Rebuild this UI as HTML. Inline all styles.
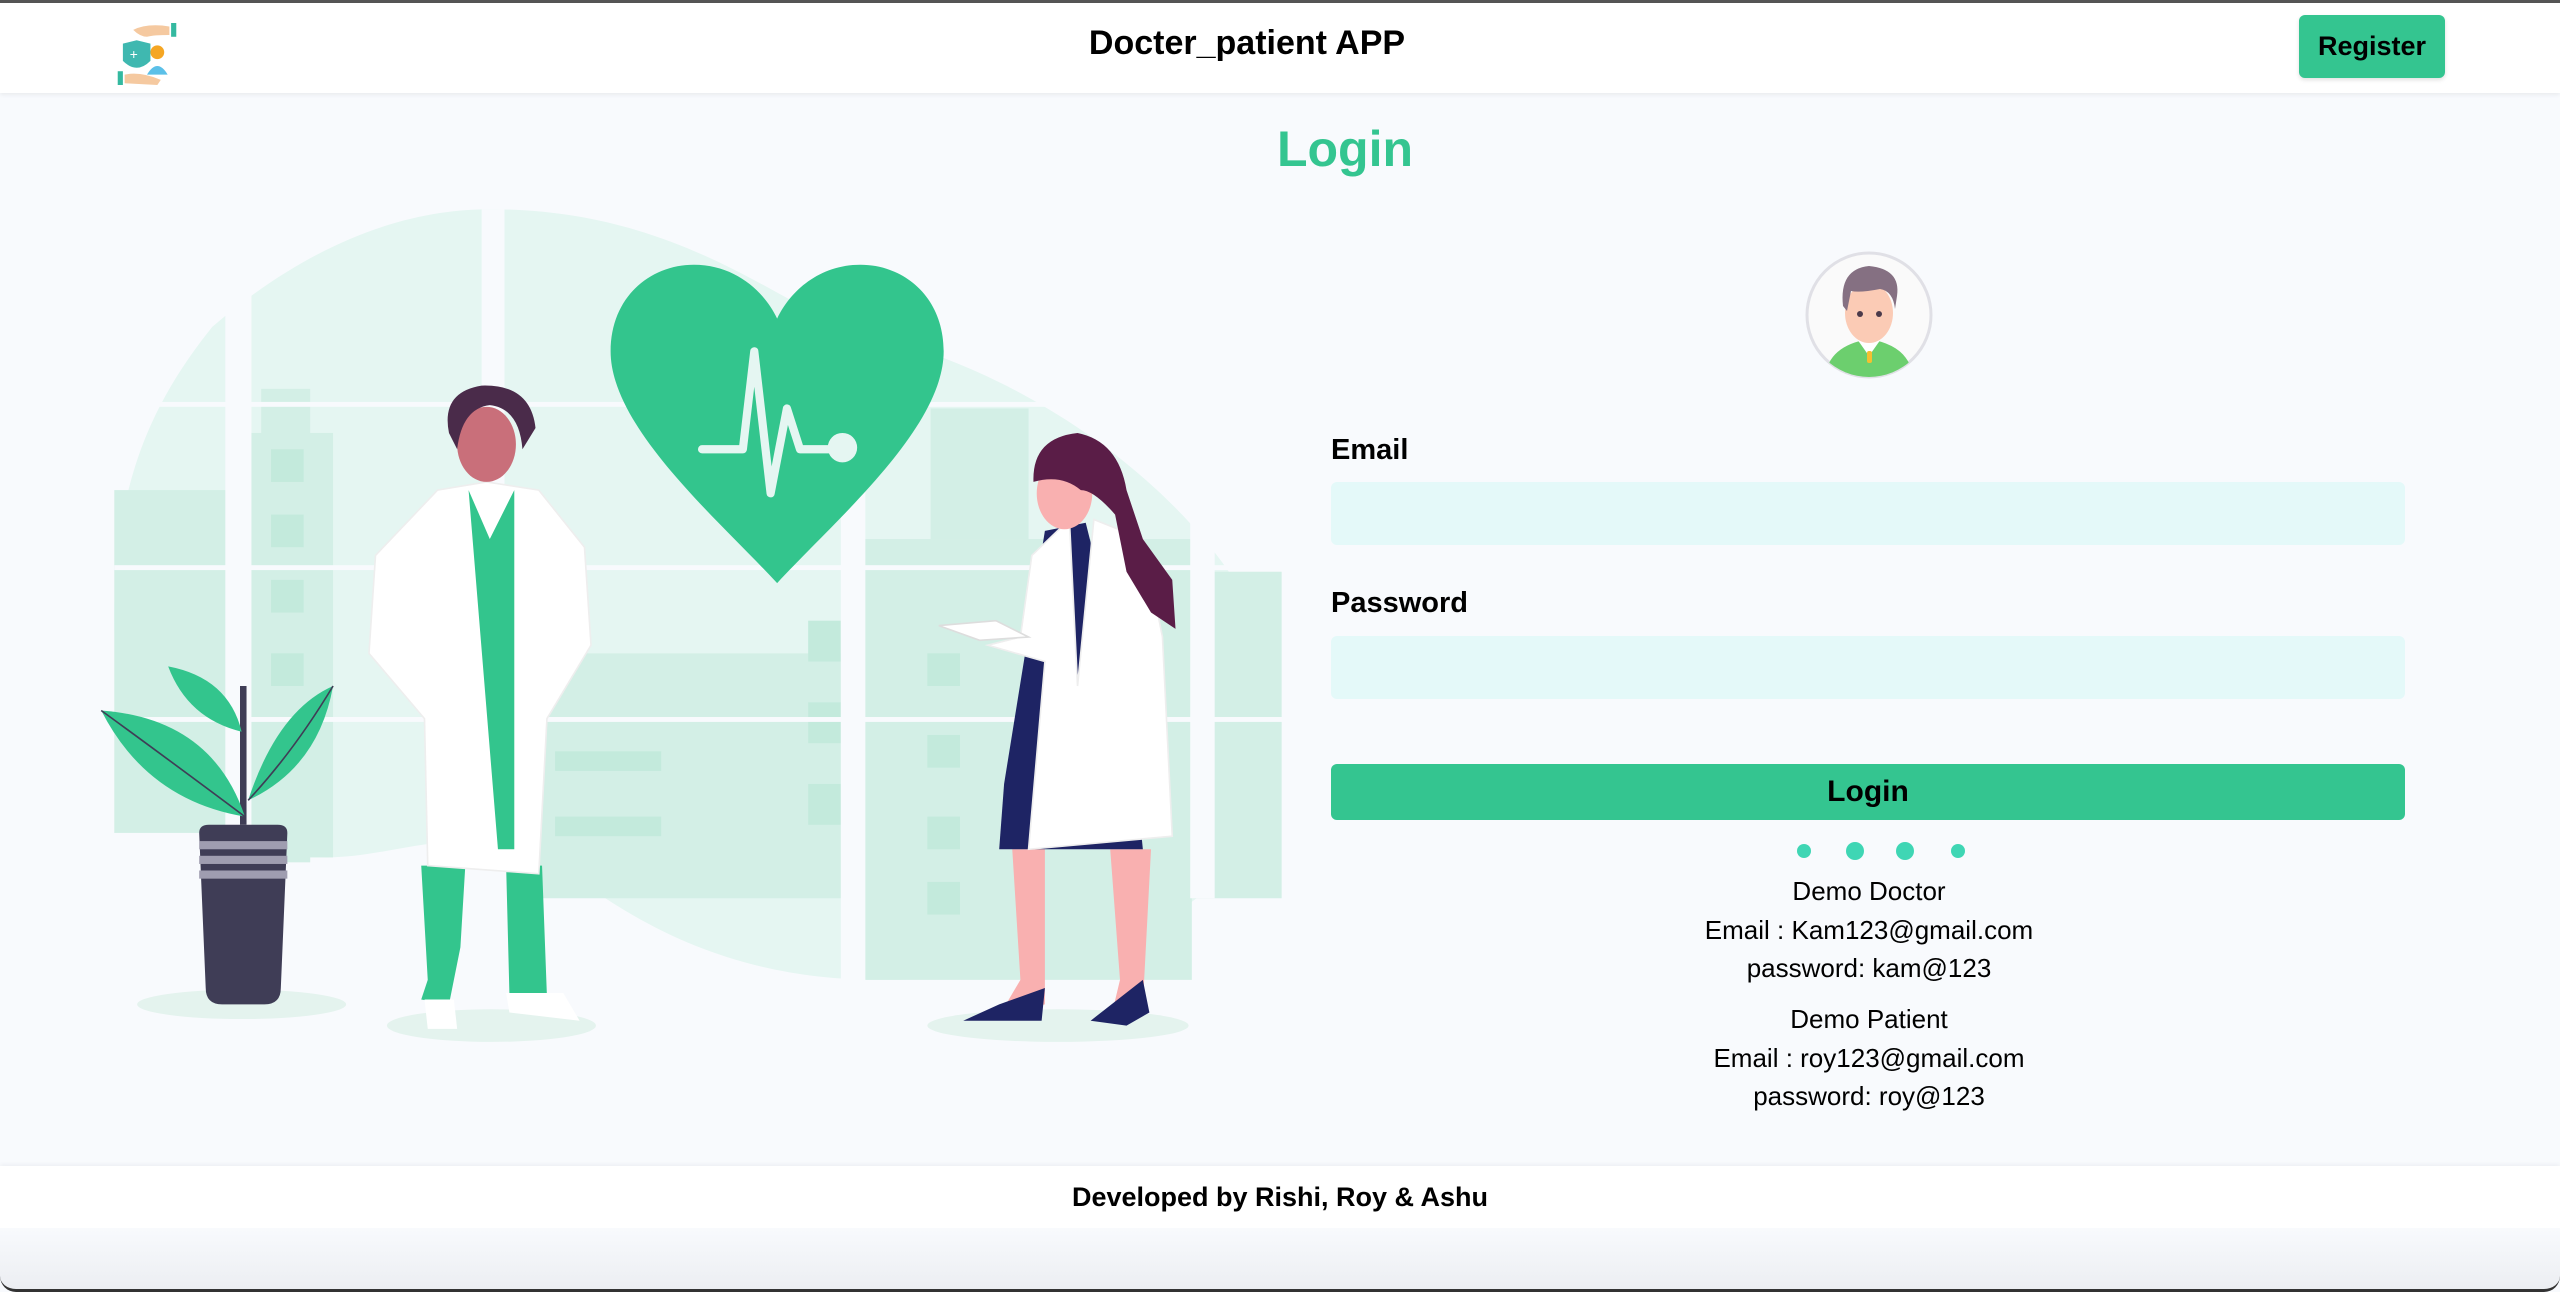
<!DOCTYPE html>
<html><head><meta charset="utf-8"><style>
*{margin:0;padding:0;box-sizing:border-box}
html,body{width:2560px;height:1292px;overflow:hidden;background:#f8fafd;font-family:"Liberation Sans",sans-serif;position:relative}
.topb{position:absolute;left:0;top:0;width:2560px;height:3px;background:#555}
header{position:absolute;left:0;top:3px;width:2560px;height:90px;background:#fff;box-shadow:0 2px 4px rgba(0,0,0,.06)}
.title{position:absolute;left:0;width:2494px;top:21px;text-align:center;font-weight:bold;font-size:34px;color:#000}
.reg{position:absolute;left:2299px;top:12px;width:146px;height:63px;background:#34c590;border-radius:6px;font-weight:bold;font-size:27px;text-align:center;line-height:63px;box-shadow:0 2px 4px rgba(0,0,0,.12)}
h1{position:absolute;left:0;width:2690px;top:120px;text-align:center;color:#34c590;font-size:50px;font-weight:bold}
.lab{position:absolute;left:1331px;font-weight:bold;font-size:29px;color:#000}
.inp{position:absolute;left:1331px;width:1074px;height:63px;background:#e4f9f9;border-radius:6px}
.btn{position:absolute;left:1331px;top:764px;width:1074px;height:56px;background:#34c590;border-radius:6px;font-weight:bold;font-size:30px;text-align:center;line-height:56px}
.dot{position:absolute;border-radius:50%;background:#3fd6b4}
.t{position:absolute;left:1569px;width:600px;text-align:center;font-size:26px;color:#000}
footer{position:absolute;left:0;top:1166px;width:2560px;height:62px;background:#fff;box-shadow:0 -2px 4px rgba(0,0,0,.04)}
footer div{text-align:center;font-weight:bold;font-size:27px;line-height:62px}
.bot{position:absolute;left:0;top:1228px;width:2560px;height:64px;background:linear-gradient(#f8fafd,#eceef2);border-bottom:3px solid #333;border-radius:0 0 16px 16px}
svg.ill{position:absolute;left:0;top:0}
</style></head><body>
<div class="topb"></div>
<header>
<svg style="position:absolute;left:116px;top:20px" width="62" height="62" viewBox="0 0 36 36">
<rect x="32" y="0" width="3" height="8" fill="#34b9a0"/><path d="M10 4 Q18 0 31 2 L31 7 Q22 7 18 8 Q14 8 10 4Z" fill="#f5c9a0"/>
<path d="M4 12 L12 10 L20 12 L20 22 Q12 30 4 22Z" fill="#3fb8b0"/><text x="8" y="21" font-size="8" fill="#fff" font-family="Liberation Sans">+</text>
<circle cx="24" cy="17" r="4" fill="#f5a623"/><path d="M18 30 Q24 20 30 30Z" fill="#5bc0e8"/>
<rect x="1" y="28" width="3" height="8" fill="#34b9a0"/><path d="M5 30 Q14 28 26 33 L24 36 L5 35Z" fill="#f5c9a0"/>
</svg>
<div class="title">Docter_patient APP</div>
<div class="reg">Register</div>
</header>
<h1>Login</h1>

<svg class="ill" width="2560" height="1292" viewBox="0 0 1568 791">
<path d="M130,200 C200,140 260,128 300,128 C420,128 480,190 530,205 C650,230 785,340 785,440 C785,540 700,600 540,600 C440,600 380,560 330,520 C280,505 240,525 200,525 C100,520 70,450 70,380 C70,300 90,250 130,200Z" fill="#e5f6f2"/>
<g fill="#d3efe6">
<rect x="160" y="238" width="30" height="290"/><rect x="152" y="265" width="52" height="260"/>
<rect x="70" y="300" width="70" height="210"/><rect x="330" y="400" width="200" height="150"/>
<rect x="530" y="330" width="200" height="270"/><rect x="570" y="250" width="60" height="80"/>
<rect x="730" y="350" width="55" height="200"/>
</g>
<g fill="#c3eadc">
<rect x="166" y="275" width="20" height="20"/><rect x="166" y="315" width="20" height="20"/><rect x="166" y="355" width="20" height="20"/><rect x="166" y="400" width="20" height="20"/>
<rect x="495" y="380" width="20" height="25"/><rect x="495" y="430" width="20" height="25"/><rect x="495" y="480" width="20" height="25"/>
<rect x="568" y="400" width="20" height="20"/><rect x="568" y="450" width="20" height="20"/><rect x="568" y="500" width="20" height="20"/><rect x="568" y="540" width="20" height="20"/>
<rect x="340" y="460" width="65" height="12"/><rect x="340" y="500" width="65" height="12"/>
</g>
<g fill="#f8fafd">
<rect x="138" y="150" width="16" height="390"/><rect x="295" y="128" width="14" height="400"/><rect x="515" y="150" width="15" height="460"/><rect x="729" y="300" width="15" height="250"/>
<rect x="70" y="246" width="720" height="3"/><rect x="70" y="346" width="720" height="3"/><rect x="70" y="439" width="720" height="3"/>
</g>
<g fill="#e4f3ee"><ellipse cx="148" cy="615" rx="64" ry="9"/><ellipse cx="301" cy="628" rx="64" ry="10"/><ellipse cx="648" cy="628" rx="80" ry="10"/></g>
<path d="M476,357 C440,318 374,262 374,215 C374,182 398,162 425,162 C450,162 468,178 476,195 C484,178 502,162 527,162 C554,162 578,182 578,215 C578,262 512,318 476,357Z" fill="#33c58d"/>
<path d="M430,275 L455,275 L462,215 L472,302 L482,250 L490,275 L508,275" fill="none" stroke="#e5f6f2" stroke-width="5" stroke-linejoin="round" stroke-linecap="round"/>
<circle cx="516" cy="274" r="9" fill="#e5f6f2"/>
<path d="M149,420 L149,505" stroke="#3f3d56" stroke-width="4"/>
<path d="M62,435 Q130,440 150,500 Q90,490 62,435Z" fill="#33c58d"/><path d="M62,435 Q110,470 150,500" stroke="#3f3d56" fill="none"/>
<path d="M103,408 Q140,415 148,448 Q115,440 103,408Z" fill="#33c58d"/>
<path d="M204,420 Q170,435 152,490 Q195,470 204,420Z" fill="#33c58d"/><path d="M204,420 Q180,460 152,490" stroke="#3f3d56" fill="none"/>
<path d="M122,510 Q122,505 128,505 L170,505 Q176,505 176,510 L172,605 Q172,615 162,615 L136,615 Q126,615 126,605Z" fill="#3f3d56"/>
<g fill="#9f9db0"><rect x="122" y="515" width="54" height="5"/><rect x="122" y="524" width="54" height="5"/><rect x="122" y="533" width="54" height="5"/></g>
<path d="M258,530 L262,600 L258,612 L275,615 L282,580 L285,530Z M310,530 L312,608 L335,610 L332,530Z" fill="#33c58d"/>
<path d="M260,612 L262,630 L280,630 L278,612Z M310,608 L312,620 L355,625 L345,608Z" fill="#fff"/>
<path d="M268,300 L230,340 L226,400 L260,440 L262,530 L330,535 L335,440 L362,395 L358,335 L330,300 L298,295Z" fill="#fff" stroke="#eee"/>
<path d="M287,300 L300,330 L315,300 L315,520 L305,520 Z" fill="#33c58d"/>
<ellipse cx="298" cy="272" rx="18" ry="23" fill="#c96f7a"/>
<path d="M275,265 Q270,240 295,236 Q325,235 328,262 L320,275 Q318,250 300,248 Q283,250 280,275Z" fill="#4a2b4a"/>
<path d="M620,520 L625,600 L612,622 L640,615 L640,520Z M680,520 L686,600 L680,625 L700,615 L705,520Z" fill="#f9b0b0"/>
<path d="M590,625 L612,615 L640,605 L638,625Z M668,625 L700,600 L704,620 L690,628Z" fill="#1e2464"/>
<path d="M640,325 L615,480 L612,520 L700,520 L690,420 L665,320Z" fill="#1e2464"/>
<path d="M655,318 L632,340 L625,390 L605,395 L640,405 L630,520 L718,512 L712,390 L700,330 L670,318 L660,420Z" fill="#fff" stroke="#eee"/>
<path d="M575,383 L610,380 L630,390 L600,392Z" fill="#fff" stroke="#ddd"/>
<ellipse cx="652" cy="302" rx="17" ry="22" fill="#f9b0b0"/>
<path d="M633,295 Q632,268 660,265 Q685,270 690,300 L700,330 L718,355 L720,385 L705,375 L690,350 L683,315 Q670,300 662,300 Q650,290 633,295Z" fill="#5a1d47"/>
</svg>

<svg style="position:absolute;left:1805px;top:251px" width="128" height="128" viewBox="0 0 128 128">
<defs><clipPath id="c"><circle cx="64" cy="64" r="62"/></clipPath></defs>
<circle cx="64" cy="64" r="62" fill="#fafafa" stroke="#e0e0e6" stroke-width="3"/>
<g clip-path="url(#c)">
<path d="M20,128 Q22,95 64,88 Q106,95 108,128Z" fill="#6ccf6e"/>
<path d="M52,88 L64,105 L76,88Z" fill="#fff"/>
<rect x="62" y="100" width="5" height="12" rx="2" fill="#f5c030"/>
<ellipse cx="64" cy="62" rx="24" ry="30" fill="#fbcbb5"/>
<path d="M38,55 Q34,18 64,15 Q96,18 92,45 L90,58 Q88,40 75,38 Q55,42 46,40 L42,60Z" fill="#857082"/>
<circle cx="55" cy="63" r="3" fill="#4b3a4a"/><circle cx="74" cy="63" r="3" fill="#4b3a4a"/>
</g></svg>

<div class="lab" style="top:434px">Email</div>
<div class="inp" style="top:482px"></div>
<div class="lab" style="top:587px">Password</div>
<div class="inp" style="top:636px"></div>
<div class="btn">Login</div>
<div class="dot" style="left:1797px;top:844px;width:14px;height:14px"></div>
<div class="dot" style="left:1846px;top:842px;width:18px;height:18px"></div>
<div class="dot" style="left:1896px;top:842px;width:18px;height:18px"></div>
<div class="dot" style="left:1951px;top:844px;width:14px;height:14px"></div>
<div class="t" style="top:876px">Demo Doctor</div>
<div class="t" style="top:915px">Email : Kam123@gmail.com</div>
<div class="t" style="top:953px">password: kam@123</div>
<div class="t" style="top:1004px">Demo Patient</div>
<div class="t" style="top:1043px">Email : roy123@gmail.com</div>
<div class="t" style="top:1081px">password: roy@123</div>
<footer><div>Developed by Rishi, Roy &amp; Ashu</div></footer>
<div class="bot"></div>
</body></html>
